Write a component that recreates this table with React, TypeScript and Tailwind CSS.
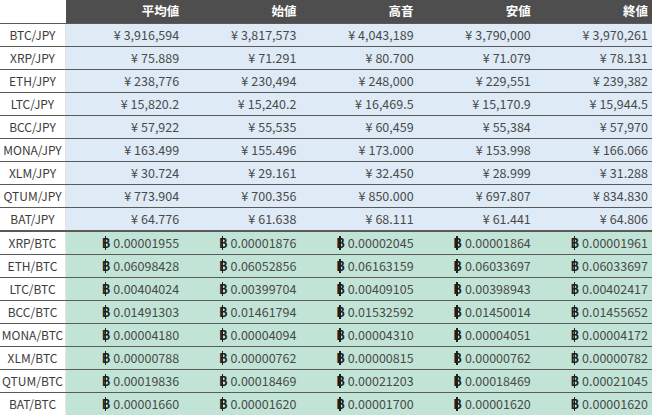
const headers = ["平均値", "始値", "高音", "安値", "終値"];

const jpy: [string, string[]][] = [
  ["BTC/JPY", ["3,916,594", "3,817,573", "4,043,189", "3,790,000", "3,970,261"]],
  ["XRP/JPY", ["75.889", "71.291", "80.700", "71.079", "78.131"]],
  ["ETH/JPY", ["238,776", "230,494", "248,000", "229,551", "239,382"]],
  ["LTC/JPY", ["15,820.2", "15,240.2", "16,469.5", "15,170.9", "15,944.5"]],
  ["BCC/JPY", ["57,922", "55,535", "60,459", "55,384", "57,970"]],
  ["MONA/JPY", ["163.499", "155.496", "173.000", "153.998", "166.066"]],
  ["XLM/JPY", ["30.724", "29.161", "32.450", "28.999", "31.288"]],
  ["QTUM/JPY", ["773.904", "700.356", "850.000", "697.807", "834.830"]],
  ["BAT/JPY", ["64.776", "61.638", "68.111", "61.441", "64.806"]],
];

const btc: [string, string[]][] = [
  ["XRP/BTC", ["0.00001955", "0.00001876", "0.00002045", "0.00001864", "0.00001961"]],
  ["ETH/BTC", ["0.06098428", "0.06052856", "0.06163159", "0.06033697", "0.06033697"]],
  ["LTC/BTC", ["0.00404024", "0.00399704", "0.00409105", "0.00398943", "0.00402417"]],
  ["BCC/BTC", ["0.01491303", "0.01461794", "0.01532592", "0.01450014", "0.01455652"]],
  ["MONA/BTC", ["0.00004180", "0.00004094", "0.00004310", "0.00004051", "0.00004172"]],
  ["XLM/BTC", ["0.00000788", "0.00000762", "0.00000815", "0.00000762", "0.00000782"]],
  ["QTUM/BTC", ["0.00019836", "0.00018469", "0.00021203", "0.00018469", "0.00021045"]],
  ["BAT/BTC", ["0.00001660", "0.00001620", "0.00001700", "0.00001620", "0.00001620"]],
];

// baht sign drawn as a bold B with a stroke through it
function Baht() {
  return (
    <span className="relative inline-block font-bold text-[#1e1e1e] mr-[3px]" aria-label="฿">
      B
      <span className="absolute left-[3px] top-[-1px] bottom-[-1px] w-[1.5px] bg-[#1e1e1e]" />
    </span>
  );
}

function Row({
  pair,
  values,
  kind,
  thick,
}: {
  pair: string;
  values: string[];
  kind: "jpy" | "btc";
  thick?: boolean;
}) {
  const bg = kind === "jpy" ? "bg-[#deeaf6]" : "bg-[#c1e4d6]";
  return (
    <div
      className={`grid grid-cols-[66px_repeat(5,1fr)] ${
        thick ? "h-[24px] border-b-2" : "h-[23px] border-b"
      } border-[#5a5a5a]`}
    >
      <div className="flex items-center justify-center bg-white border-r border-[#e4e4e4] text-[#3c3c3c] text-[12px]">
        {pair}
      </div>
      {values.map((v, i) => (
        <div key={i} className={`flex items-center justify-end pr-[4px] ${bg} text-[#4a4a4a]`}>
          {kind === "jpy" ? (
            <span>
              <span className="mr-[3px]">¥</span>
              {v}
            </span>
          ) : (
            <span className="flex items-center">
              <Baht />
              {v}
            </span>
          )}
        </div>
      ))}
    </div>
  );
}

export default function App() {
  return (
    <div
      className="w-[652px] h-[415px] bg-white overflow-hidden text-[12.5px] leading-none"
      style={{ fontFamily: '"Noto Sans CJK JP", "Noto Sans", sans-serif' }}
    >
      <div className="grid grid-cols-[66px_repeat(5,1fr)] h-[23px]">
        <div className="bg-white" />
        {headers.map((h) => (
          <div
            key={h}
            className="flex items-center justify-end pr-[4px] bg-[#4e4e4e] text-white font-bold text-[12.5px]"
          >
            {h}
          </div>
        ))}
      </div>
      <div className="border-t border-[#5a5a5a]" />
      {jpy.map(([p, v], i) => (
        <Row key={p} pair={p} values={v} kind="jpy" thick={i === jpy.length - 1} />
      ))}
      {btc.map(([p, v]) => (
        <Row key={p} pair={p} values={v} kind="btc" />
      ))}
    </div>
  );
}
